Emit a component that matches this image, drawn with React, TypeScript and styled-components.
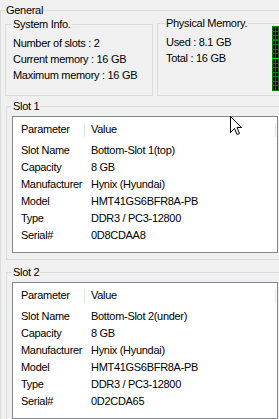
import React from "react";
import styled, { createGlobalStyle } from "styled-components";

const GlobalStyle = createGlobalStyle`
  html, body { margin: 0; padding: 0; background: #f0f0f0; }
  body {
    font-family: "Liberation Sans", Arial, sans-serif;
    font-size: 11px;
    letter-spacing: -0.3px;
    color: #000;
  }
`;

const Screen = styled.div`
  position: relative;
  width: 279px;
  height: 419px;
  overflow: hidden;
  background: #f0f0f0;
`;

const Group = styled.fieldset<{ $top?: number; $left?: number; $width: number; $height?: number }>`
  box-sizing: border-box;
  flex: none;
  margin: ${(p) => p.$top ?? 0}px 0 0 ${(p) => p.$left ?? 0}px;
  padding: 0;
  border: 1px solid #dcdcdc;
  min-width: 0;
  width: ${(p) => p.$width}px;
  height: ${(p) => (p.$height ? `${p.$height}px` : "auto")};
`;

const Legend = styled.legend<{ $offset: number }>`
  margin-left: ${(p) => p.$offset}px;
  padding: 0 1px;
  height: 13px;
  line-height: 13px;
  white-space: nowrap;
`;

const GeneralBody = styled.div`
  display: flex;
  flex-direction: column;
  align-items: flex-start;
`;

const TopRow = styled.div`
  display: flex;
  align-items: flex-start;
  gap: 4px;
  padding-left: 4px;
`;

const InfoBody = styled.div`
  padding: 4px 0 0 7px;
`;

const InfoLine = styled.div`
  height: 16px;
  line-height: 16px;
  white-space: nowrap;
`;

const PhysBody = styled.div`
  display: flex;
  align-items: flex-start;
  padding-left: 8px;
`;

const PhysText = styled.div`
  width: 106px;
  padding-top: 4px;
`;

const ChartBox = styled.svg`
  display: block;
  flex: none;
  margin-top: -4px;
  background: #000;
`;

const SlotBody = styled.div`
  padding: 3px 0 6px 5px;
`;

const ListBox = styled.div`
  box-sizing: border-box;
  width: 266px;
  height: 137px;
  border: 1px solid #828790;
  background: #fff;
`;

const Header = styled.div`
  display: flex;
  height: 25px;
`;

const HeaderCell = styled.div<{ $width?: number; $pad: number }>`
  ${(p) => (p.$width ? `width: ${p.$width}px; flex: none;` : "flex: 1;")}
  padding-left: ${(p) => p.$pad}px;
  box-sizing: border-box;
  line-height: 25px;
  white-space: nowrap;
`;

const HeaderDivider = styled.div`
  flex: none;
  width: 1px;
  height: 14px;
  margin-top: 6px;
  background: #e5e5e5;
`;

const HeaderTail = styled.div`
  flex: none;
  width: 1px;
`;

const Row = styled.div`
  display: grid;
  grid-template-columns: 72px 1fr;
  height: 17px;
  line-height: 17px;
  white-space: nowrap;
`;

const Cell = styled.div<{ $pad: number }>`
  padding-left: ${(p) => p.$pad}px;
  overflow: hidden;
`;

const Cursor = styled.svg`
  position: absolute;
  left: 230px;
  top: 116px;
`;

type Slot = { title: string; rows: [string, string][] };

const slots: Slot[] = [
  {
    title: "Slot 1",
    rows: [
      ["Slot Name", "Bottom-Slot 1(top)"],
      ["Capacity", "8 GB"],
      ["Manufacturer", "Hynix (Hyundai)"],
      ["Model", "HMT41GS6BFR8A-PB"],
      ["Type", "DDR3 / PC3-12800"],
      ["Serial#", "0D8CDAA8"],
    ],
  },
  {
    title: "Slot 2",
    rows: [
      ["Slot Name", "Bottom-Slot 2(under)"],
      ["Capacity", "8 GB"],
      ["Manufacturer", "Hynix (Hyundai)"],
      ["Model", "HMT41GS6BFR8A-PB"],
      ["Type", "DDR3 / PC3-12800"],
      ["Serial#", "0D2CDA65"],
    ],
  },
];

const MemoryChart = () => {
  const hs = Array.from({ length: 15 }, (_, k) => Math.round((k * 64) / 14) + 0.5);
  const vs = [0.5, 3.5, 6.5, 9.5];
  return (
    <ChartBox width={12} height={65} viewBox="0 0 12 65">
      {hs.map((y) => (
        <line key={`h${y}`} x1={0} x2={12} y1={y} y2={y} stroke="#008000" strokeWidth={1} />
      ))}
      {vs.map((x) => (
        <line key={`v${x}`} x1={x} x2={x} y1={0} y2={65} stroke="#008000" strokeWidth={1} />
      ))}
      <line x1={0} x2={12} y1={13.5} y2={13.5} stroke="#ff0000" strokeWidth={1} />
      <line x1={0} x2={12} y1={32.5} y2={32.5} stroke="#00ff00" strokeWidth={1} />
    </ChartBox>
  );
};

const SlotList = ({ rows }: { rows: [string, string][] }) => (
  <ListBox>
    <Header>
      <HeaderCell $width={71} $pad={8}>Parameter</HeaderCell>
      <HeaderDivider />
      <HeaderCell $width={190} $pad={6}>Value</HeaderCell>
      <HeaderDivider />
      <HeaderTail />
    </Header>
    {rows.map(([k, v]) => (
      <Row key={k}>
        <Cell $pad={8}>{k}</Cell>
        <Cell $pad={6}>{v}</Cell>
      </Row>
    ))}
  </ListBox>
);

export default function App() {
  return (
    <>
      <GlobalStyle />
      <Screen>
        <Group $top={4} $left={0} $width={300}>
          <Legend $offset={4}>General</Legend>
          <GeneralBody>
            <TopRow>
              <Group $top={1} $width={148} $height={78}>
                <Legend $offset={6}>System Info.</Legend>
                <InfoBody>
                  <InfoLine>Number of slots : 2</InfoLine>
                  <InfoLine>Current memory : 16 GB</InfoLine>
                  <InfoLine>Maximum memory : 16 GB</InfoLine>
                </InfoBody>
              </Group>
              <Group $width={140} $height={79}>
                <Legend $offset={7}>Physical Memory.</Legend>
                <PhysBody>
                  <PhysText>
                    <InfoLine>Used : 8.1 GB</InfoLine>
                    <InfoLine>Total : 16 GB</InfoLine>
                  </PhysText>
                  <MemoryChart />
                </PhysBody>
              </Group>
            </TopRow>
            {slots.map((s, i) => (
              <Group key={s.title} $top={i === 0 ? 4 : 6} $left={5} $width={290}>
                <Legend $offset={5}>{s.title}</Legend>
                <SlotBody>
                  <SlotList rows={s.rows} />
                </SlotBody>
              </Group>
            ))}
          </GeneralBody>
        </Group>
        <Cursor width={13} height={20} viewBox="0 0 13 20">
          <polygon
            points="0.5,0.5 0.5,16.5 4.5,12.5 7,18.5 9.5,17.5 7,11.5 11.5,11.5"
            fill="#fff"
            stroke="#000"
            strokeWidth={1}
            strokeLinejoin="miter"
          />
        </Cursor>
      </Screen>
    </>
  );
}
